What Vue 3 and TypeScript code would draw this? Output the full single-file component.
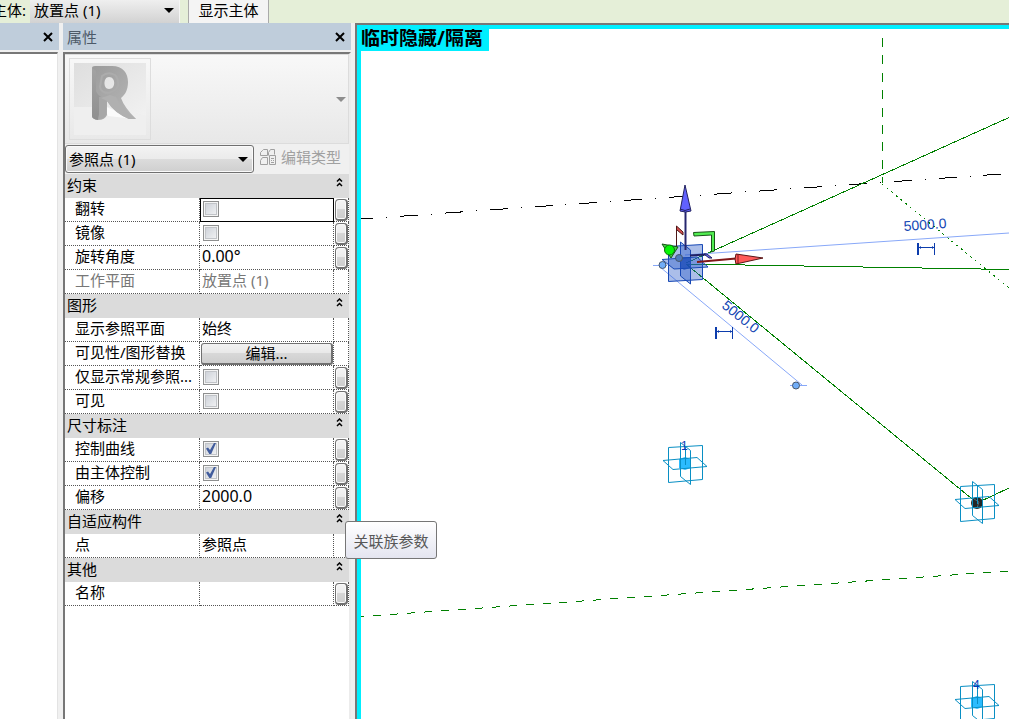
<script setup lang="ts">
import { ref, reactive } from 'vue'

type Kind = 'check' | 'text' | 'readonly' | 'button'
interface Row {
  id: string
  name: string
  kind: Kind
  value?: string
  checked?: boolean
  link?: boolean
  focused?: boolean
  numeric?: boolean
  tip?: string
}
interface Group {
  title: string
  open: boolean
  rows: Row[]
}

const host = ref('放置点 (1)')
const category = ref('参照点 (1)')

const groups = reactive<Group[]>([
  {
    title: '约束',
    open: true,
    rows: [
      { id: 'flip', name: '翻转', kind: 'check', checked: false, link: true, focused: true },
      { id: 'mirror', name: '镜像', kind: 'check', checked: false, link: true },
      { id: 'angle', name: '旋转角度', kind: 'text', value: '0.00°', link: true, numeric: true },
      { id: 'plane', name: '工作平面', kind: 'readonly', value: '放置点 (1)' },
    ],
  },
  {
    title: '图形',
    open: true,
    rows: [
      { id: 'showplane', name: '显示参照平面', kind: 'text', value: '始终' },
      { id: 'override', name: '可见性/图形替换', kind: 'button', value: '编辑...' },
      { id: 'normal', name: '仅显示常规参照...', kind: 'check', checked: false, link: true },
      { id: 'visible', name: '可见', kind: 'check', checked: false, link: true },
    ],
  },
  {
    title: '尺寸标注',
    open: true,
    rows: [
      { id: 'curve', name: '控制曲线', kind: 'check', checked: true, link: true },
      { id: 'hosted', name: '由主体控制', kind: 'check', checked: true, link: true },
      { id: 'offset', name: '偏移', kind: 'text', value: '2000.0', link: true, numeric: true },
    ],
  },
  {
    title: '自适应构件',
    open: true,
    rows: [{ id: 'point', name: '点', kind: 'text', value: '参照点', tip: '关联族参数' }],
  },
  {
    title: '其他',
    open: true,
    rows: [{ id: 'label', name: '名称', kind: 'text', value: '', link: true }],
  },
])

const points = [
  { x: 685, y: 464, tag: '1', core: 'soft' },
  { x: 977, y: 503, tag: '', core: 'dark' },
  { x: 977, y: 703, tag: '4', core: 'soft' },
]
</script>

<template>
  <div class="app">
    <header class="options">
      <label class="host-label" for="host">主体:</label>
      <span class="host-box">
        <select id="host" v-model="host"><option>放置点 (1)</option></select>
        <svg class="arrow" width="10" height="5" viewBox="0 0 10 5"><path d="M0 0H10L5 5Z" /></svg>
      </span>
      <button class="show-host" type="button">显示主体</button>
    </header>

    <main class="work">
      <aside class="side">
        <div class="caption">
          <button class="close" type="button" aria-label="关闭">
            <svg width="10" height="10" viewBox="0 0 10 10"><path d="M1 1L9 9M9 1L1 9" /></svg>
          </button>
        </div>
        <div class="blank"></div>
      </aside>

      <section class="panel">
        <div class="caption">
          <span>属性</span>
          <button class="close" type="button" aria-label="关闭">
            <svg width="10" height="10" viewBox="0 0 10 10"><path d="M1 1L9 9M9 1L1 9" /></svg>
          </button>
        </div>
        <div class="body">
          <button class="type" type="button" aria-label="类型选择器">
            <span class="thumb">
              <svg width="80" height="80" viewBox="0 0 80 80">
                <defs>
                  <linearGradient id="wall" x1="0" y1="0" x2="1" y2="1">
                    <stop offset="0" stop-color="#dedede" />
                    <stop offset="1" stop-color="#f1f1f1" />
                  </linearGradient>
                  <linearGradient id="stem" x1="0" y1="0" x2="0" y2="1">
                    <stop offset="0" stop-color="#a3a3a3" />
                    <stop offset="1" stop-color="#8f8f8f" />
                  </linearGradient>
                  <linearGradient id="leg" x1="0" y1="0" x2="1" y2="1">
                    <stop offset="0" stop-color="#9b9b9b" />
                    <stop offset="1" stop-color="#b9b9b9" />
                  </linearGradient>
                </defs>
                <path d="M4 4H76V57L44 48H4Z" fill="url(#wall)" />
                <path d="M4 48H44L76 57V76H4Z" fill="#efefef" />
                <path d="M34 47L65 60L38 57Z" fill="#fbfbfb" />
                <path d="M22 9Q22 7 25 7H42C53 7 58 14 58 23C58 31 55 36 51 39Q54 48 66 60H59Q44 54 37 42V56Q35 61 28 61Q22 60 22 57ZM39 18C33 18 33 30 39 30C46 30 46 18 39 18Z" fill="url(#leg)" fill-rule="evenodd" />
                <path d="M22 9L26 12V32Q28 37 32 38L28 61Q22 60 22 57Z" fill="url(#stem)" />
                <path d="M29 38L37 36L36 56Q34 60 29 60Z" fill="#a7a7a7" />
                <path d="M37 42L31 39L40 36L46 38Q50 47 66 60H59Q45 54 37 42Z" fill="#b0b0b0" />
                <path d="M32 17Q38 12 45 16Q49 20 48 27Q46 32 39 34Q31 34 30 28Z" fill="none" stroke="#acacac" stroke-width="2" />
              </svg>
            </span>
            <svg width="10" height="5" viewBox="0 0 10 5"><path d="M0 0H10L5 5Z" fill="#8d8d8d" /></svg>
          </button>

          <div class="filter">
            <span class="category-box">
              <select v-model="category" aria-label="类别"><option>参照点 (1)</option></select>
              <svg class="arrow" width="10" height="5" viewBox="0 0 10 5"><path d="M0 0H10L5 5Z" /></svg>
            </span>
            <button class="edit-type" type="button" disabled>
              <svg width="17" height="17" viewBox="0 0 17 17" fill="none" stroke="#a0a0a0">
                <path d="M2.5 1.5L3.5 .5H7.5V6.5H.5V3.5ZM8.5 6.5V3.5L10.5 .5H14.5V5.5M.5 15.5V11.5L2.5 8.5H7.5V15.5Z" />
                <path d="M9.5 6.5H15.5V15.5H9.5ZM11 9.5H14M11 11.5H12M13 11.5H14M11 13.5H14" />
              </svg>
              <span>编辑类型</span>
            </button>
          </div>

          <table class="grid">
            <colgroup><col class="c-name" /><col /><col class="c-link" /></colgroup>
            <tbody v-for="g in groups" :key="g.title">
              <tr class="group">
                <th colspan="3" scope="rowgroup">
                  <span class="group-line">
                    <span>{{ g.title }}</span>
                    <button type="button" class="fold" :aria-expanded="g.open" :aria-label="'折叠' + g.title" @click="g.open = !g.open">
                      <svg width="7" height="9" viewBox="0 0 7 9"><path d="M1 3.5L3.5 1L6 3.5M1 8L3.5 5.5L6 8" stroke-width="1.5" /></svg>
                    </button>
                  </span>
                </th>
              </tr>
              <template v-if="g.open">
                <tr v-for="r in g.rows" :key="r.id" :class="{ dim: r.kind === 'readonly' }">
                  <th scope="row"><label :for="r.id">{{ r.name }}</label></th>
                  <td :class="{ focused: r.focused }">
                    <input v-if="r.kind === 'check'" :id="r.id" v-model="r.checked" type="checkbox" />
                    <button v-else-if="r.kind === 'button'" :id="r.id" class="edit" type="button">{{ r.value }}</button>
                    <input v-else :id="r.id" v-model="r.value" type="text" :class="{ numeric: r.numeric }" :readonly="r.kind === 'readonly'" />
                  </td>
                  <td class="link-cell">
                    <button v-if="r.link" class="link" type="button" :aria-label="'关联 ' + r.name"></button>
                    <span v-if="r.tip" class="tip" role="tooltip">{{ r.tip }}</span>
                  </td>
                </tr>
              </template>
            </tbody>
          </table>
        </div>
      </section>

      <section class="view">
        <svg class="scene" viewBox="361 29 648 690" preserveAspectRatio="xMinYMin slice">
          <g class="thin black"><path d="M361 219L1009 173.5" stroke-dasharray="18 13 1 13" stroke-dashoffset="6" /></g>
          <g class="thin green">
            <path d="M882.5 38V183" stroke-dasharray="9 8.4" />
            <path d="M882 184L1009 288" stroke-dasharray="2 4" />
            <path d="M361 616.5L1009 571" stroke-dasharray="8 9" stroke-dashoffset="5" />
            <path d="M686 263L1009 117.5M686 264L1009 269.5M686 264L977 503L1009 488" />
          </g>
          <g class="dim-line">
            <path d="M685 255L1009 233M660 267L802 385M653 265.5H667M790 385.5H807" />
          </g>

          <g fill="#2c5cc8" fill-opacity=".4" stroke="#1748b5">
            <path d="M668.5 246.5L702.5 244.5V279.5L668.5 281.5Z" />
            <path d="M680.5 242L690.5 250V284L680.5 276Z" />
            <path d="M662 259.5L697 257L708 267L674 269Z" />
          </g>
          <path d="M680 257H690V268L684 270L680 267Z" fill="#1748b5" fill-opacity=".65" />
          <path d="M685.5 210V250" stroke="#26266e" stroke-width="2" />
          <path d="M680 211L685 185L691 211Q685.5 213 680 211Z" fill="#6161ff" stroke="#222260" />
          <path d="M680 209Q685 212 690 209" fill="none" stroke="#222260" />
          <path d="M676.5 247V226L683 232V235L677 230" fill="#d85050" stroke="#4b1717" />
          <path d="M693.5 232.5L714.5 231.5V251L711.5 252V235L694 236Z" fill="#51ee51" stroke="#175417" />
          <path d="M697 262L736 258.5" stroke="#801818" stroke-width="2" />
          <path d="M736 254Q734 259 736 264L763 258Z" fill="#ff5a5a" stroke="#5a1717" />
          <path d="M738 254V264" stroke="#801818" />
          <path d="M690 255.5L706 254.500" fill="none" stroke="#202065" stroke-width="2" />
          <path d="M704 254L707 254L712 258L709 258Z" fill="#6666e8" stroke="#202065" />
          <path d="M662 244L678 247L671 258Z" fill="#43d643" stroke="#175417" />
          <circle cx="669.5" cy="250" r="5" fill="#05f505" stroke="#0a710a" />
          <g fill="#71adf8" stroke="#46566c">
            <circle cx="662.5" cy="265" r="3.5" />
            <circle cx="679" cy="258" r="3.5" fill="#4f78bd" />
            <circle cx="796" cy="385.5" r="3.5" />
          </g>

          <g class="dim-mark">
            <path d="M918 243V255M716 327V339" stroke-width="2" />
            <path d="M934.5 243V255M918 247.5H934M732.5 327V339M716 331.5H732" />
            <path d="M919 247.5L921 246V249ZM934 247.5L932 246V249ZM717 331.5L719 330V333ZM732 331.5L730 330V333Z" stroke="none" />
          </g>
          <g class="dim-text">
            <text transform="translate(904 231) rotate(-4)">5000.0</text>
            <text transform="translate(721 307) rotate(39)">5000.0</text>
          </g>

          <g v-for="p in points" :key="p.x + '-' + p.y" :transform="`translate(${p.x} ${p.y})`">
            <g v-if="p.core === 'soft'" fill="#2bbcff">
              <path d="M-6 -5L0 -7L6 -5V4L0 6L-6 4Z" />
            </g>
            <g v-else>
              <circle r="6" fill="#242424" />
              <path d="M-3 -4L2 -1L0 5" fill="none" stroke="#59636b" />
            </g>
            <path class="star" d="M-16.5 -16.5L17.5 -18.5V15.5L-16.5 18.5ZM-4.5 -21.5L5.5 -13.5V20.5L-4.5 12.5ZM-22 -3.5L12 -6.5L22 2.5L-12 5.5ZM.5 -18V1" />
            <text class="tag" x="-4" y="-14">{{ p.tag }}</text>
          </g>
        </svg>
        <strong class="banner">临时隐藏/隔离</strong>
      </section>
    </main>
  </div>
</template>

<style>
body {
  margin: 0;
}
</style>

<style scoped>
.app {
  display: flex;
  flex-direction: column;
  height: 100vh;
  overflow: hidden;
  background: #f0f0f0;
  color: #000;
  font: 15px/20px "Noto Sans", "Noto Sans CJK SC", sans-serif;
}
* {
  box-sizing: border-box;
}
button,
input,
select {
  font: inherit;
  color: inherit;
  margin: 0;
  padding: 0;
  border: 0;
  border-radius: 0;
  background: none;
  appearance: none;
  outline: none;
}
.options {
  display: flex;
  flex: none;
  height: 23px;
  background: #e5efd8;
}
.host-label {
  display: flex;
  justify-content: flex-end;
  width: 26px;
  margin-right: 4px;
  white-space: nowrap;
}
.host-box,
.category-box {
  position: relative;
  display: block;
}
.host-box {
  width: 150px;
  background: linear-gradient(#efefef, #d2d2d2);
  border-right: 1px solid #f5f5f5;
}
.host-box select {
  display: block;
  width: 100%;
  height: 20px;
  padding-left: 4px;
}
.arrow {
  position: absolute;
  right: 5px;
  top: 8px;
  pointer-events: none;
}
.show-host {
  width: 81px;
  height: 23px;
  margin-left: 8px;
  padding-bottom: 3px;
  line-height: 20px;
  background: #f4f4f4;
  border: solid #aaa;
  border-width: 0 1px;
}
.work {
  display: flex;
  flex: 1;
  min-height: 0;
}
.side {
  display: flex;
  flex-direction: column;
  flex: none;
  width: 59px;
  margin-right: 4px;
}
.panel {
  position: relative;
  z-index: 2;
  display: flex;
  flex-direction: column;
  flex: none;
  width: 288px;
  margin-right: 4px;
}
.caption {
  display: flex;
  align-items: center;
  height: 27px;
  margin-bottom: 2px;
  padding: 0 6px 0 4px;
  background: #bfcddb;
  color: #4d5a68;
}
.close {
  display: flex;
  margin-left: auto;
}
.close path {
  fill: none;
  stroke: #000;
  stroke-width: 2;
}
.blank {
  flex: 1;
  margin-right: 1px;
  background: #fff;
  border-top: 2px solid #777;
  border-right: 1px solid #e3e3e3;
}
.body {
  flex: 1;
  background: #fff;
  border: solid #777;
  border-width: 2px 2px 0;
  border-right-color: #ececec;
}
.type {
  display: flex;
  align-items: center;
  justify-content: space-between;
  width: 100%;
  height: 90px;
  padding: 0 2px 0 4px;
  background: linear-gradient(#f8f8f8, #e8e8e8);
  border: solid #dcdcdc;
  border-width: 1px 1px 1px 0;
}
.thumb {
  display: block;
  width: 82px;
  height: 82px;
  border: 1px solid #ddd;
}
.thumb svg {
  display: block;
}
.filter {
  display: flex;
  align-items: center;
  height: 30px;
  background: #f0f0f0;
}
.category-box {
  width: 189px;
}
.category-box select {
  display: block;
  width: 100%;
  height: 28px;
  padding-left: 3px;
  border: 1px solid #707070;
  border-radius: 3px;
  background: linear-gradient(#f3f3f3, #ebebeb 50%, #dcdcdc 50%, #cfcfcf);
  box-shadow: inset 0 0 0 1px #fafafa;
}
.category-box .arrow {
  right: 6px;
  top: 12px;
}
.edit-type {
  display: flex;
  align-items: center;
  gap: 4px;
  margin: 0 0 4px 6px;
  color: #a0a0a0;
}
.grid {
  width: 100%;
  table-layout: fixed;
  border-collapse: separate;
  border-spacing: 0;
}
.c-name {
  width: 135px;
}
.c-link {
  width: 15px;
}
.grid tr {
  height: 24px;
}
.grid th,
.grid td {
  height: 24px;
  padding: 0;
  font-weight: 400;
  text-align: left;
  vertical-align: middle;
  border-bottom: 1px dotted #555;
}
.grid tr:not(.group) > th,
.grid td {
  border-right: 1px dotted #555;
}
.grid .group th {
  padding: 0 6px 0 2px;
  background: #dbdbdb;
  border-bottom: 0;
}
.group-line {
  display: flex;
  justify-content: space-between;
  height: 24px;
  line-height: 22px;
}
.fold {
  display: flex;
  height: 9px;
  margin-top: 4px;
}
.fold path {
  fill: none;
  stroke: #000;
}
.grid th label {
  display: block;
  height: 22px;
  padding-left: 10px;
  overflow: hidden;
  white-space: nowrap;
  line-height: 18px;
}
.dim {
  color: #777;
}
.grid input[type='text'] {
  display: block;
  width: 100%;
  height: 23px;
  padding: 0 0 5px 2px;
}
.grid input.numeric {
  padding-bottom: 3px;
  font-size: 16px;
}
.grid input[type='checkbox'] {
  display: block;
  width: 16px;
  height: 16px;
  margin: 0 0 2px 3px;
  border: 1px solid #8e8f8f;
  background: linear-gradient(135deg, #c9cdd5, #f5f6f7);
  box-shadow: inset 0 0 0 1px #f4f4f4, inset 0 0 0 2px #c1c4c8;
}
.grid input[type='checkbox']:checked {
  display: grid;
  place-items: center;
}
.grid input[type='checkbox']:checked::before {
  content: '';
  width: 10px;
  height: 11px;
  background: #425d9d;
  clip-path: polygon(0 50%, 20% 40%, 40% 64%, 80% 0, 100% 0, 52% 100%, 33% 100%);
}
.grid td.focused {
  border: 1px solid #000;
}
.grid .focused input[type='checkbox'] {
  margin-left: 2px;
}
.edit {
  display: block;
  width: 132px;
  height: 22px;
  margin-left: 1px;
  padding-bottom: 2px;
  line-height: 18px;
  text-align: center;
  border: 1px solid #707070;
  border-right-width: 2px;
  border-bottom-width: 2px;
  border-radius: 3px;
  background: linear-gradient(#f2f2f2, #e8e8e8 50%, #d8d8d8 50%, #cecece);
}
.grid .link-cell {
  position: relative;
}
.link {
  display: block;
  width: 13px;
  height: 22px;
  margin-left: 1px;
  border: 1px solid #707070;
  border-right-width: 2px;
  border-bottom-width: 2px;
  border-radius: 4px;
  background: linear-gradient(#f4f4f4, #ececec 50%, #d6d6d6 50%, #cdcdcd);
  box-shadow: inset 0 0 0 1px #fafafa;
}
.tip {
  position: absolute;
  left: 11px;
  top: -13px;
  z-index: 3;
  width: 92px;
  height: 38px;
  line-height: 38px;
  text-align: center;
  white-space: nowrap;
  color: #575757;
  background: linear-gradient(#fff, #e4e5f0);
  border: 1px solid #767676;
  border-radius: 3px;
}
.view {
  position: relative;
  flex: 1;
  min-width: 0;
  overflow: hidden;
  border: solid #00efff;
  border-width: 4px 0 0 4px;
  background: #fff;
  outline: 2px solid #777;
  margin: 2px 0 0 2px;
}
.scene {
  display: block;
  width: 100%;
  height: 100%;
}
.banner {
  position: absolute;
  left: -4px;
  top: -4px;
  padding: 0 6px 0 4px;
  line-height: 26px;
  font-size: 19px;
  background: #00efff;
}
.thin {
  fill: none;
  shape-rendering: crispEdges;
}
.black {
  stroke: #000;
}
.green {
  stroke: #008000;
}
.dim-line {
  fill: none;
  stroke: #88a8f8;
}
.dim-mark {
  fill: #0c3cac;
  stroke: #0c3cac;
}
.dim-text {
  fill: #1447b4;
  font: 14px "Liberation Sans", sans-serif;
}
.star {
  fill: none;
  stroke: #098fc4;
}
.tag {
  fill: #0838b8;
  font: 12px "Liberation Sans", sans-serif;
}
</style>
